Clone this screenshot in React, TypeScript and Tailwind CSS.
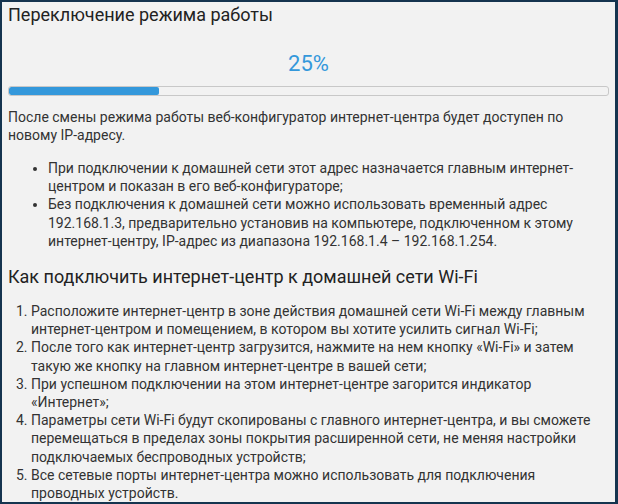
const steps = [
  'Расположите интернет-центр в зоне действия домашней сети Wi-Fi между главным интернет-центром и помещением, в котором вы хотите усилить сигнал Wi-Fi;',
  'После того как интернет-центр загрузится, нажмите на нем кнопку «Wi-Fi» и затем такую же кнопку на главном интернет-центре в вашей сети;',
  'При успешном подключении на этом интернет-центре загорится индикатор «Интернет»;',
  'Параметры сети Wi-Fi будут скопированы с главного интернет-центра, и вы сможете перемещаться в пределах зоны покрытия расширенной сети, не меняя настройки подключаемых беспроводных устройств;',
  'Все сетевые порты интернет-центра можно использовать для подключения проводных устройств.',
];

export default function App() {
  return (
    <div className="w-[618px] h-[504px] bg-[#15344f] pt-[2px] pl-[2px] pr-[3px] pb-[2px]" style={{ fontFamily: 'Roboto, "Liberation Sans", sans-serif' }}>
      <div className="h-full bg-[#f2f2f2] px-[6px] pt-[1px] overflow-hidden">
        <h1 className="text-[18px] leading-[24px] text-[#222]">Переключение режима работы</h1>

        <div className="mt-[24px] text-center text-[22px] leading-[26px] text-[#3498db]">25%</div>

        <div className="mt-[9px] h-[10px] rounded-[3px] border border-[#c8c8c8] bg-[#f2f2f2] overflow-hidden">
          <div className="h-full bg-[#3498db] rounded-[2px]" style={{ width: '25%' }} />
        </div>

        <p className="mt-[12px] text-[14px] leading-[18px] text-[#333]">
          После смены режима работы веб-конфигуратор интернет-центра будет доступен по новому IP-адресу.
        </p>

        <ul className="mt-[15px] list-disc pl-[40px] text-[14px] leading-[18.2px] text-[#333]">
          <li>При подключении к домашней сети этот адрес назначается главным интернет-центром и показан в его веб-конфигураторе;</li>
          <li>
            Без подключения к домашней сети можно использовать временный адрес 192.168.1.3, предварительно установив на компьютере,
            подключенном к этому интернет-центру, IP-адрес из диапазона 192.168.1.4 – 192.168.1.254.
          </li>
        </ul>

        <h2 className="mt-[15px] text-[18px] leading-[24px] text-[#222]">Как подключить интернет-центр к домашней сети Wi-Fi</h2>

        <ol className="mt-[13px] list-decimal pl-[23px] text-[14px] leading-[18.2px] text-[#333]">
          {steps.map((s, i) => (
            <li key={i}>{s}</li>
          ))}
        </ol>
      </div>
    </div>
  );
}
